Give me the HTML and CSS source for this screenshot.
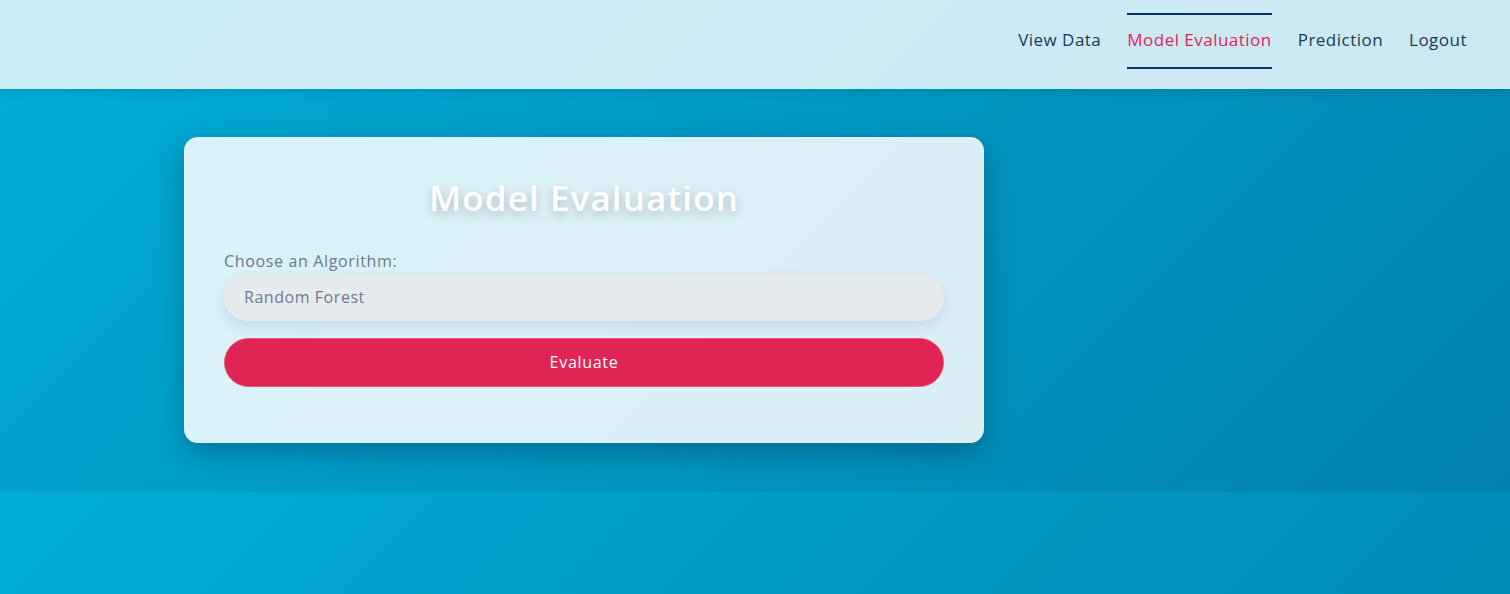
FILE: index.html
```html
<!DOCTYPE html>
<html lang="en">
<head>
<meta charset="utf-8">
<title>Model Evaluation</title>
<link rel="stylesheet" href="styles.css">
</head>
<body>
<header class="topbar">
  <nav class="nav">
    <a class="nav-link" href="#">View Data</a>
    <a class="nav-link active" href="#">Model Evaluation</a>
    <a class="nav-link" href="#">Prediction</a>
    <a class="nav-link" href="#">Logout</a>
  </nav>
</header>
<section class="main">
  <div class="card">
    <h1 class="card-title">Model Evaluation</h1>
    <form class="form">
      <label class="label" for="algo">Choose an Algorithm:</label>
      <div class="select" id="algo">Random Forest</div>
      <button class="btn" type="button">Evaluate</button>
    </form>
  </div>
</section>
</body>
</html>
```

FILE: styles.css
```css
html {
  background: linear-gradient(135deg, #00add7, #0082ae);
}
body {
  margin: 0;
  font-family: "Open Sans", "Liberation Sans", sans-serif;
}
.topbar {
  height: 89px;
  box-sizing: border-box;
  background: rgba(255, 255, 255, 0.8);
  box-shadow: 0 2px 10px rgba(0, 0, 0, 0.12);
  display: flex;
  justify-content: flex-end;
  align-items: flex-start;
  padding: 13px 43px 0 0;
  position: relative;
  z-index: 1;
}
.nav {
  display: flex;
  gap: 26px;
}
.nav-link {
  display: block;
  font-size: 17px;
  letter-spacing: 0.48px;
  line-height: 24px;
  padding: 13px 0 15px;
  border-top: 2px solid transparent;
  border-bottom: 2px solid transparent;
  color: #1b3a57;
  text-decoration: none;
}
.nav-link.active {
  color: #e2245a;
  border-color: #053566;
}
.main {
  padding: 48px 0 49px 184px;
}
.card {
  width: 800px;
  box-sizing: border-box;
  padding: 40px 40px 56px;
  border-radius: 14px;
  background: rgba(255, 255, 255, 0.86);
  box-shadow: 0 10px 28px rgba(0, 40, 70, 0.35);
}
.card-title {
  margin: 0;
  text-align: center;
  font-size: 35px;
  letter-spacing: 1.1px;
  line-height: 42px;
  font-weight: 600;
  color: #ffffff;
  text-shadow: 0 4px 10px rgba(0, 0, 0, 0.22);
}
.form {
  display: flex;
  flex-direction: column;
  margin-top: 31px;
}
.label {
  font-size: 16px;
  letter-spacing: 0.65px;
  line-height: 22px;
  color: #6b7894;
  margin-bottom: 2px;
}
.select {
  height: 47px;
  box-sizing: border-box;
  border-radius: 24px;
  background: #e6ebee;
  padding: 0 20px 1px;
  display: flex;
  align-items: center;
  font-size: 16px;
  letter-spacing: 0.55px;
  color: #6e7a93;
  box-shadow: 0 6px 14px rgba(0, 60, 90, 0.12);
}
.btn {
  margin-top: 17px;
  height: 49px;
  padding: 0 0 1px;
  border-radius: 25px;
  border: 1px solid #f0566e;
  background: #e02456;
  color: #ffffff;
  font-family: inherit;
  font-size: 16px;
  letter-spacing: 0.7px;
}
```
